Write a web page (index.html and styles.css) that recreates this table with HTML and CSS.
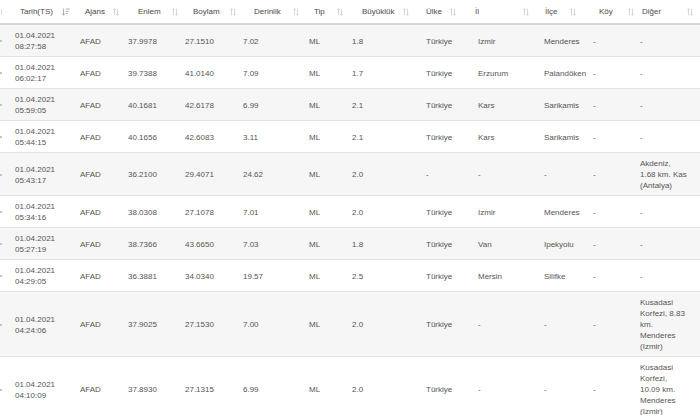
FILE: index.html
```html
<!DOCTYPE html>
<html lang="tr">
<head>
<meta charset="utf-8">
<title>Depremler</title>
<link rel="stylesheet" href="styles.css">
</head>
<body>
<table class="quakes">
  <colgroup>
    <col class="c0"><col class="c1"><col class="c2"><col class="c3"><col class="c4"><col class="c5"><col class="c6"><col class="c7"><col class="c8"><col class="c9"><col class="c10"><col class="c11"><col class="c12">
  </colgroup>
  <thead>
    <tr>
      <th><span class="edge-icon"></span></th>
      <th>Tarih(TS)<svg class="si si-desc" width="8" height="8" viewBox="0 0 8 8"><path d="M1.5 0.5V7.2M0.2 5.6L1.5 7.2L2.8 5.6M3.8 1h4M3.8 3.3h3M3.8 5.6h2" fill="none" stroke="#a8a8a8" stroke-width="0.9"/></svg></th>
      <th>Ajans<svg class="si" width="6" height="8" viewBox="0 0 6 8"><path d="M1.5 0.6V7.4M0.4 1.8L1.5 0.6L2.6 1.8M4.5 0.6V7.4M3.4 6.2L4.5 7.4L5.6 6.2" fill="none" stroke="#d2d2d2" stroke-width="0.9"/></svg></th>
      <th>Enlem<svg class="si" width="6" height="8" viewBox="0 0 6 8"><path d="M1.5 0.6V7.4M0.4 1.8L1.5 0.6L2.6 1.8M4.5 0.6V7.4M3.4 6.2L4.5 7.4L5.6 6.2" fill="none" stroke="#d2d2d2" stroke-width="0.9"/></svg></th>
      <th>Boylam<svg class="si" width="6" height="8" viewBox="0 0 6 8"><path d="M1.5 0.6V7.4M0.4 1.8L1.5 0.6L2.6 1.8M4.5 0.6V7.4M3.4 6.2L4.5 7.4L5.6 6.2" fill="none" stroke="#d2d2d2" stroke-width="0.9"/></svg></th>
      <th>Derinlik<svg class="si" width="6" height="8" viewBox="0 0 6 8"><path d="M1.5 0.6V7.4M0.4 1.8L1.5 0.6L2.6 1.8M4.5 0.6V7.4M3.4 6.2L4.5 7.4L5.6 6.2" fill="none" stroke="#d2d2d2" stroke-width="0.9"/></svg></th>
      <th>Tip<svg class="si" width="6" height="8" viewBox="0 0 6 8"><path d="M1.5 0.6V7.4M0.4 1.8L1.5 0.6L2.6 1.8M4.5 0.6V7.4M3.4 6.2L4.5 7.4L5.6 6.2" fill="none" stroke="#d2d2d2" stroke-width="0.9"/></svg></th>
      <th>Büyüklük<svg class="si" width="6" height="8" viewBox="0 0 6 8"><path d="M1.5 0.6V7.4M0.4 1.8L1.5 0.6L2.6 1.8M4.5 0.6V7.4M3.4 6.2L4.5 7.4L5.6 6.2" fill="none" stroke="#d2d2d2" stroke-width="0.9"/></svg></th>
      <th>Ülke<svg class="si" width="6" height="8" viewBox="0 0 6 8"><path d="M1.5 0.6V7.4M0.4 1.8L1.5 0.6L2.6 1.8M4.5 0.6V7.4M3.4 6.2L4.5 7.4L5.6 6.2" fill="none" stroke="#d2d2d2" stroke-width="0.9"/></svg></th>
      <th>İl<svg class="si" width="6" height="8" viewBox="0 0 6 8"><path d="M1.5 0.6V7.4M0.4 1.8L1.5 0.6L2.6 1.8M4.5 0.6V7.4M3.4 6.2L4.5 7.4L5.6 6.2" fill="none" stroke="#d2d2d2" stroke-width="0.9"/></svg></th>
      <th>İlçe<svg class="si" width="6" height="8" viewBox="0 0 6 8"><path d="M1.5 0.6V7.4M0.4 1.8L1.5 0.6L2.6 1.8M4.5 0.6V7.4M3.4 6.2L4.5 7.4L5.6 6.2" fill="none" stroke="#d2d2d2" stroke-width="0.9"/></svg></th>
      <th>Köy<svg class="si" width="6" height="8" viewBox="0 0 6 8"><path d="M1.5 0.6V7.4M0.4 1.8L1.5 0.6L2.6 1.8M4.5 0.6V7.4M3.4 6.2L4.5 7.4L5.6 6.2" fill="none" stroke="#d2d2d2" stroke-width="0.9"/></svg></th>
      <th>Diğer<svg class="si" width="6" height="8" viewBox="0 0 6 8"><path d="M1.5 0.6V7.4M0.4 1.8L1.5 0.6L2.6 1.8M4.5 0.6V7.4M3.4 6.2L4.5 7.4L5.6 6.2" fill="none" stroke="#d2d2d2" stroke-width="0.9"/></svg></th>
    </tr>
  </thead>
  <tbody>
    <tr><td><span class="edge-mark"></span></td><td>01.04.2021<br>08:27:58</td><td>AFAD</td><td>37.9978</td><td>27.1510</td><td>7.02</td><td>ML</td><td>1.8</td><td>Türkiye</td><td>Izmir</td><td>Menderes</td><td>-</td><td class="other">-</td></tr>
    <tr><td><span class="edge-mark"></span></td><td>01.04.2021<br>06:02:17</td><td>AFAD</td><td>39.7388</td><td>41.0140</td><td>7.09</td><td>ML</td><td>1.7</td><td>Türkiye</td><td>Erzurum</td><td>Palandöken</td><td>-</td><td class="other">-</td></tr>
    <tr><td><span class="edge-mark"></span></td><td>01.04.2021<br>05:59:05</td><td>AFAD</td><td>40.1681</td><td>42.6178</td><td>6.99</td><td>ML</td><td>2.1</td><td>Türkiye</td><td>Kars</td><td>Sarikamis</td><td>-</td><td class="other">-</td></tr>
    <tr><td><span class="edge-mark"></span></td><td>01.04.2021<br>05:44:15</td><td>AFAD</td><td>40.1656</td><td>42.6083</td><td>3.11</td><td>ML</td><td>2.1</td><td>Türkiye</td><td>Kars</td><td>Sarikamis</td><td>-</td><td class="other">-</td></tr>
    <tr><td><span class="edge-mark"></span></td><td>01.04.2021<br>05:43:17</td><td>AFAD</td><td>36.2100</td><td>29.4071</td><td>24.62</td><td>ML</td><td>2.0</td><td>-</td><td>-</td><td>-</td><td>-</td><td class="other">Akdeniz,<br>1.68 km. Kas<br>(Antalya)</td></tr>
    <tr><td><span class="edge-mark"></span></td><td>01.04.2021<br>05:34:16</td><td>AFAD</td><td>38.0308</td><td>27.1078</td><td>7.01</td><td>ML</td><td>2.0</td><td>Türkiye</td><td>Izmir</td><td>Menderes</td><td>-</td><td class="other">-</td></tr>
    <tr><td><span class="edge-mark"></span></td><td>01.04.2021<br>05:27:19</td><td>AFAD</td><td>38.7366</td><td>43.6650</td><td>7.03</td><td>ML</td><td>1.8</td><td>Türkiye</td><td>Van</td><td>Ipekyolu</td><td>-</td><td class="other">-</td></tr>
    <tr><td><span class="edge-mark"></span></td><td>01.04.2021<br>04:29:05</td><td>AFAD</td><td>36.3881</td><td>34.0340</td><td>19.57</td><td>ML</td><td>2.5</td><td>Türkiye</td><td>Mersin</td><td>Silifke</td><td>-</td><td class="other">-</td></tr>
    <tr><td><span class="edge-mark"></span></td><td>01.04.2021<br>04:24:06</td><td>AFAD</td><td>37.9025</td><td>27.1530</td><td>7.00</td><td>ML</td><td>2.0</td><td>Türkiye</td><td>-</td><td>-</td><td>-</td><td class="other">Kusadasi<br>Korfezi, 8.83<br>km.<br>Menderes<br>(Izmir)</td></tr>
    <tr><td><span class="edge-mark"></span></td><td>01.04.2021<br>04:10:09</td><td>AFAD</td><td>37.8930</td><td>27.1315</td><td>6.99</td><td>ML</td><td>2.0</td><td>Türkiye</td><td>-</td><td>-</td><td>-</td><td class="other">Kusadasi<br>Korfezi,<br>10.09 km.<br>Menderes<br>(Izmir)</td></tr>
  </tbody>
</table>
</body>
</html>
```
FILE: styles.css
```css
html, body {
  margin: 0;
  padding: 0;
  background: #ffffff;
  overflow: hidden;
}

.quakes {
  border-collapse: collapse;
  table-layout: fixed;
  width: 700px;
  font-family: "Liberation Sans", Arial, sans-serif;
  font-size: 8px;
  line-height: 11px;
  color: #555555;
}

.c0 { width: 8px; }
.c1 { width: 65px; }
.c2 { width: 48px; }
.c3 { width: 57px; }
.c4 { width: 58px; }
.c5 { width: 66px; }
.c6 { width: 43px; }
.c7 { width: 74px; }
.c8 { width: 52px; }
.c9 { width: 66px; }
.c10 { width: 49px; }
.c11 { width: 47px; }
.c12 { width: 67px; }

.quakes th {
  position: relative;
  padding: 6px 0 6px 12px;
  border-bottom: 2px solid #d6d6d6;
  font-weight: normal;
  text-align: left;
  color: #4a4a4a;
  white-space: nowrap;
}

.quakes th:first-child { padding-left: 0; }
.quakes th:nth-child(4) { padding-left: 17px; }
.quakes th:nth-child(5) { padding-left: 15px; }
.quakes th:nth-child(6) { padding-left: 18px; }
.quakes th:nth-child(8) { padding-left: 17px; }
.quakes th:nth-child(9) { padding-left: 7px; }
.quakes th:nth-child(10) { padding-left: 4px; }
.quakes th:nth-child(11) { padding-left: 8px; }
.quakes th:nth-child(12) { padding-left: 13px; }
.quakes th:nth-child(13) { padding-left: 9px; }

.si {
  position: absolute;
  top: 8px;
  right: 2px;
}
.quakes th:nth-child(2) .si { right: 3px; }
.quakes th:nth-child(4) .si { right: 0; }
.quakes th:nth-child(5) .si { right: 0; }
.quakes th:nth-child(6) .si { right: 3px; }
.quakes th:nth-child(8) .si { right: 10px; }
.quakes th:nth-child(9) .si { right: 15px; }
.quakes th:nth-child(10) .si { right: 8px; }
.quakes th:nth-child(11) .si { right: 10px; }
.quakes th:nth-child(12) .si { right: -1px; }
.quakes th:nth-child(13) .si { right: 7px; }

.edge-icon {
  display: block;
  width: 1px;
  height: 6px;
  background: #dcdcdc;
  margin-left: 1px;
}

.quakes td {
  padding: 5px 0 4px 7px;
  border-top: 1px solid #e2e2e2;
  vertical-align: middle;
  white-space: nowrap;
}

.quakes td:first-child { padding-left: 0; }

.quakes tbody tr:nth-child(odd) td {
  background: #f6f6f6;
}

.edge-mark {
  display: block;
  width: 2px;
  height: 2px;
  background: #c4c4c4;
}
```
